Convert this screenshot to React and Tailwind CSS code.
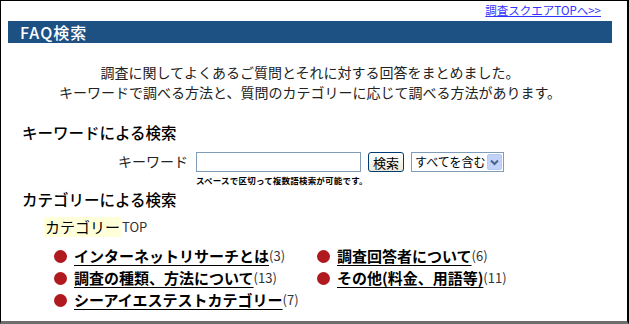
import React from "react";

const font = { fontFamily: '"Noto Sans CJK JP", "Noto Sans", sans-serif' };

function Bullet() {
  return <span className="inline-block w-[13px] h-[13px] rounded-full bg-[#b0191e] mr-[7px] shrink-0" />;
}

function Item({ label, count }) {
  return (
    <div className="flex items-center h-[22px] whitespace-nowrap">
      <Bullet />
      <a className="text-[15px] font-bold text-black underline underline-offset-[3px] decoration-1 leading-[22px]">{label}</a>
      <span className="text-[13px] text-[#333] leading-[22px]">({count})</span>
    </div>
  );
}

export default function App() {
  return (
    <div style={font} className="w-[629px] h-[324px] box-border border-l border-t border-black border-r-2 border-b-[3px] border-b-[#6e6e6e] bg-white text-black overflow-hidden">
      <div className="flex justify-end pr-[26px] h-[20px] pt-[1px]">
        <a className="text-[11.5px] leading-[17px] text-[#3333ff] underline">調査スクエアTOPへ&gt;&gt;</a>
      </div>
      <div className="ml-[7px] mr-[15px]">
        <div className="h-[22px] bg-[#1d5083] text-white text-[16px] tracking-[1px] leading-[22px] pl-[12px] font-medium">FAQ検索</div>
        <div className="mt-[19px] text-center text-[14px] leading-[20px] text-[#222]">
          <p>調査に関してよくあるご質問とそれに対する回答をまとめました。</p>
          <p>キーワードで調べる方法と、質問のカテゴリーに応じて調べる方法があります。</p>
        </div>
      </div>
      <div className="pl-[21px] mt-[20px]">
        <h2 className="text-[15.5px] font-medium leading-[20px]">キーワードによる検索</h2>
        <div className="flex items-start mt-[10px] pl-[96px]">
          <span className="text-[14px] leading-[20px] mt-[-1px] mr-[8px] text-[#222]">キーワード</span>
          <div className="flex flex-col w-[165px] shrink-0">
            <input className="w-[165px] h-[20px] border border-[#7f9db9] bg-white outline-none" />
            <span className="text-[8.5px] font-bold leading-[14px] mt-[1px] tracking-[0.2px] whitespace-nowrap">スペースで区切って複数語検索が可能です。</span>
          </div>
          <button className="ml-[7px] w-[36px] h-[20px] rounded-[3px] border border-[#003c74] bg-gradient-to-b from-white to-[#ece9d8] text-[13px] leading-[17px] text-black">検索</button>
          <div className="ml-[7px] w-[93px] h-[20px] border border-[#7f9db9] flex items-center bg-white shrink-0">
            <span className="text-[12px] leading-[18px] pl-[3px] flex-1 whitespace-nowrap">すべてを含む</span>
            <span className="w-[15px] h-[16px] mr-[1px] rounded-[2px] bg-[#c1d3fb] border border-[#b6c9f2] flex items-center justify-center shrink-0">
              <svg width="9" height="7" viewBox="0 0 9 7"><path d="M1 1.5 L4.5 5 L8 1.5" stroke="#4d6185" strokeWidth="2" fill="none" /></svg>
            </span>
          </div>
        </div>
        <h2 className="text-[15.5px] font-medium leading-[20px] mt-[2px]">カテゴリーによる検索</h2>
        <div className="mt-[8px] ml-[22px] flex items-center h-[20px]">
          <span className="bg-[#ffffd9] text-[15px] leading-[20px] px-[1px]">カテゴリー</span>
          <span className="text-[13px] leading-[20px] text-[#333] ml-[1px]">TOP</span>
        </div>
        <div className="mt-[8px] ml-[32px] grid grid-cols-[263px_auto]">
          <Item label="インターネットリサーチとは" count="3" />
          <Item label="調査回答者について" count="6" />
          <Item label="調査の種類、方法について" count="13" />
          <Item label="その他(料金、用語等)" count="11" />
          <Item label="シーアイエステストカテゴリー" count="7" />
        </div>
      </div>
    </div>
  );
}
